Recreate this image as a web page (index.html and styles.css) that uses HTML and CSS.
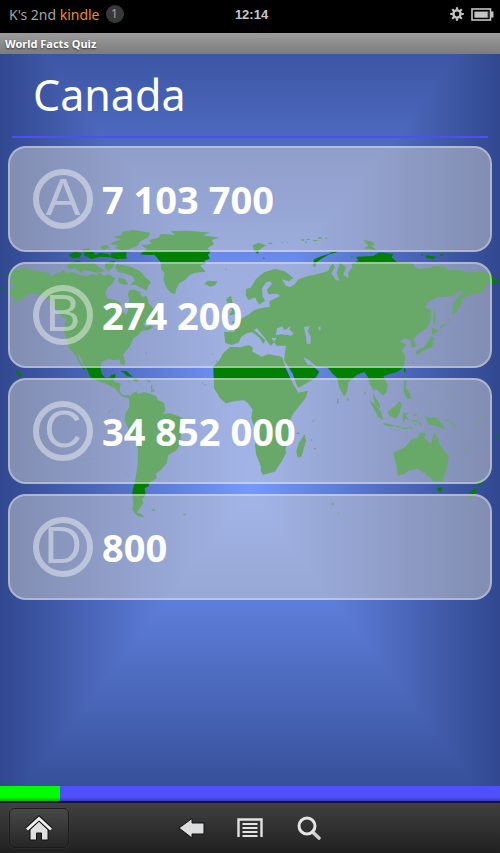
FILE: index.html
```html
<!DOCTYPE HTML>
<html lang="en">
<head>
	<title>World Facts Quiz</title>
	<meta charset="utf-8">
	<meta name="viewport" content="width=device-width, initial-scale=1">
	<link rel="stylesheet" href="styles.css">
</head>
<body>
	<header class="status">
		<div class="device">
			<span>K's 2nd <span class="brand">kindle</span></span>
			<span class="count">1</span>
		</div>
		<time class="clock">12:14</time>
		<div class="indicators">
			<svg width="14" height="14" viewBox="0 0 14 14" aria-hidden="true">
				<circle cx="7" cy="7" r="3.6" fill="none" stroke="#c4c4c4" stroke-width="2.4"/>
				<path d="M7 0.2v2.6M7 11.2v2.6M0.2 7h2.6M11.2 7h2.6M2.2 2.2l1.8 1.8M10 10l1.8 1.8M2.2 11.8L4 10M10 4l1.8-1.8" stroke="#c4c4c4" stroke-width="2.2"/>
			</svg>
			<svg width="23" height="13" viewBox="0 0 23 13" aria-hidden="true">
				<rect x="1" y="1" width="18.5" height="11" fill="#000" stroke="#c4c4c4" stroke-width="1.6"/>
				<rect x="20" y="3.5" width="2.5" height="6" fill="#c4c4c4"/>
				<rect x="3.5" y="3" width="14" height="7" fill="#555"/>
				<rect x="3.5" y="4" width="13" height="5.5" fill="#c4c4c4"/>
			</svg>
		</div>
	</header>

	<div class="titlebar">World Facts Quiz</div>

	<main class="quiz">
		<svg class="map" viewBox="0 0 1500 900" aria-hidden="true">
			<!-- North America -->
			<path d="M25 165L45 148 75 143 90 150 110 152 150 160 152 172 160 164 185 155 190 150 200 158 215 156 240 165 265 168 275 162 290 165 300 158 312 168 325 162 345 175 338 190 322 203 316 220 322 235 345 240 362 250 366 272 378 285 385 272 382 255 389 240 383 225 388 209 405 209 420 216 425 231 440 228 446 250 462 268 472 285 470 300 450 303 428 312 438 322 450 316 462 320 445 330 425 332 415 345 400 355 390 378 368 405 375 425 372 438 362 430 358 418 345 421 325 418 305 425 302 445 305 462 318 475 330 472 333 465 347 461 345 473 339 484 362 491 358 512 369 526 385 524 393 530 380 535 365 528 355 516 343 504 318 491 290 482 270 471 265 455 252 435 241 410 233 400 238 420 255 445 252 450 238 430 224 403 206 383 202 365 192 335 195 310 200 298 185 290 172 274 158 255 148 238 120 226 95 219 80 224 70 236 50 246 28 259 18 271 42 242 56 236 40 235 25 220 27 208 43 203 43 194 20 190 28 181 43 180Z"/>
			<!-- Arctic islands -->
			<path d="M365 36L400 30 450 38 446 51 420 64 414 76 392 86 365 90 346 85 354 76 328 72 345 64 365 60 340 50 365 45Z"/>
			<path d="M350 132L372 136 395 142 420 153 436 172 453 187 444 198 441 213 425 204 405 194 390 196 404 181 396 168 374 160 356 157 345 143Z"/>
			<path d="M210 128L235 122 250 130 282 128 300 143 315 153 290 158 255 151 242 158 225 145 210 148 198 138ZM205 105L225 95 245 100 240 112 218 115ZM250 98L280 94 285 105 300 98 328 103 330 112 300 110 275 117 255 108ZM333 98L380 96 378 106 380 116 350 117 330 112ZM315 128L345 122 340 140 325 153 315 145ZM300 79L322 74 328 84 308 90ZM245 88L268 84 270 92 250 97ZM356 172L375 178 385 194 366 193 354 185Z"/>
			<!-- Greenland -->
			<path d="M420 103L440 88 425 76 455 71 448 60 475 53 483 42 525 44 512 34 555 32 585 34 630 38 608 46 657 53 635 60 642 73 622 85 633 94 624 105 630 116 612 122 620 130 600 136 617 155 585 158 568 166 555 180 538 190 528 208 526 222 512 218 499 203 490 180 493 160 482 145 484 130 464 105 442 105Z"/>
			<!-- Caribbean and small Atlantic islands -->
			<path d="M360 453L380 454 398 471 382 469 371 459ZM402 474L418 479 410 486 399 481ZM383 482L390 484 384 487ZM613 191L623 182 652 184 646 195 630 200ZM55 453L65 466 60 470 46 456Z"/>
			<!-- South America -->
			<path d="M386 532L400 519 410 514 414 523 431 516 451 521 468 528 474 540 492 549 496 569 489 583 512 580 540 590 558 602 555 622 543 640 541 673 530 690 505 705 500 729 485 747 467 762 471 774 448 788 447 798 434 805 437 826 426 838 430 850 420 864 410 878 425 882 432 892 412 888 397 870 399 850 397 815 406 780 413 735 414 690 411 666 393 648 384 622 374 600 377 580 388 562 388 545Z"/>
			<!-- Europe and Asia with the Black and Caspian seas cut out -->
			<path fill-rule="evenodd" d="M672 336L703 335 710 316 693 306 718 300 745 284 765 269 785 264 810 260 808 244 840 228 832 221 806 223 800 210 816 192 811 184 798 187 786 205 788 230 795 242 777 254 765 232 745 240 737 225 738 207 752 203 768 177 792 157 825 147 855 154 880 174 867 184 846 178 858 197 870 202 884 193 896 178 925 168 950 163 985 153 992 138 1000 130 1004 142 994 160 1008 180 1018 182 1010 158 1020 128 1038 140 1030 165 1045 174 1045 155 1058 142 1054 132 1075 122 1068 110 1120 108 1138 97 1180 101 1175 112 1190 126 1240 129 1243 140 1258 146 1290 143 1305 138 1335 140 1342 150 1380 149 1400 158 1450 154 1480 167 1477 176 1497 182 1485 193 1470 188 1453 195 1457 208 1433 222 1407 224 1388 236 1378 262 1362 285 1357 258 1372 232 1393 214 1375 212 1362 228 1310 232 1285 246 1275 263 1293 270 1292 302 1280 325 1250 345 1241 357 1249 379 1236 383 1232 362 1213 355 1200 365 1220 373 1206 391 1216 413 1212 440 1193 455 1150 468 1163 496 1160 516 1149 528 1130 508 1119 510 1123 528 1138 549 1141 566 1126 554 1119 532 1121 508 1110 494 1105 473 1093 456 1071 464 1045 487 1042 512 1033 530 1018 504 1012 474 1001 464 983 443 950 440 927 420 910 412 922 433 938 437 958 455 947 473 897 503 891 498 878 461 852 420 858 377 829 377 822 366 829 354 814 353 823 366 812 378 794 353 771 324 762 330 796 361 790 372 779 354 757 336 740 340 723 352 715 368 695 375 676 369ZM828 345L831 325 847 319 854 331 872 318 869 329 882 340 874 347 845 343ZM912 322L930 317 923 333 932 350 932 371 920 372 918 350ZM956 322L962 319 961 332 956 329Z"/>
			<!-- Africa -->
			<path d="M640 440L659 419 668 401 690 381 720 382 748 375 759 383 757 395 786 410 805 402 846 411 858 446 878 489 895 518 924 512 917 534 880 580 868 605 873 635 870 660 856 685 858 700 844 725 825 755 789 764 782 752 783 740 768 702 765 675 769 640 754 594 758 569 744 550 733 541 710 542 678 550 660 535 642 504Z"/>
			<path d="M914 643L918 662 904 711 892 712 889 695 896 670ZM678 238L693 227 697 247 706 268 711 281 687 286 697 270 686 255ZM672 273L685 262 686 278 673 285ZM1042 531L1048 539 1042 544Z"/>
			<path d="M938 137L942 118 965 108 993 100 967 115 950 127 946 142ZM1092 85L1110 74 1130 91 1112 88ZM1090 59L1118 65 1125 76 1105 77ZM758 76L776 68 798 76 780 88 773 101 762 92ZM1276 106L1310 110 1298 117 1280 113Z"/>
			<!-- East and South-East Asia -->
			<path d="M1303 263L1307 295 1304 319 1300 300ZM1294 322L1317 333 1297 345ZM1293 350L1302 352 1297 381 1276 389 1250 405 1248 393 1273 381ZM1212 444L1218 448 1212 461ZM1213 477L1220 483 1217 502 1228 516 1234 535 1222 538 1210 514ZM1162 575L1186 558 1200 543 1205 553 1198 583 1187 596 1168 587ZM1108 540L1122 551 1142 574 1150 600 1135 592 1120 564ZM1150 609L1182 615 1179 620 1153 616ZM1207 580L1230 577 1217 586 1229 603 1217 594 1210 609ZM1275 588L1290 593 1305 591 1321 605 1335 628 1315 621 1303 617 1285 613Z"/>
			<!-- Australia and New Zealand -->
			<path d="M1180 699L1215 681 1236 658 1251 655 1260 638 1277 638 1273 655 1293 672 1302 637 1313 654 1319 674 1346 708 1341 745 1327 785 1300 783 1286 767 1278 770 1280 755 1271 760 1254 746 1225 752 1212 763 1193 767 1190 740ZM1311 803L1328 802 1323 815 1315 814ZM1434 781L1448 786 1437 799 1431 794ZM1423 804L1431 809 1420 824 1407 837 1405 826Z"/>
			<!-- Small islands -->
			<path class="islets" d="M5 205h6M15 270h2M20 160v6M437 400h4M325 575h6M335 570h3M322 582h2M455 870h10M550 884h7M253 720h3M273 716h3M90 672h3M124 692h2M378 760h3M440 480l12 6M455 495v22M460 508v8M606 489h2M614 495h3M638 427h2M648 424h3M637 402h2M676 148h3M805 70h12M790 115h3M845 68h3M862 68h2M905 60h8M920 58h10M940 62h12M955 54h10M975 55h6M915 67h6M990 100l20-5M1055 110h2M1265 105h4M1320 105h10M1342 103h4M1205 398l10 12M1240 425v6M1248 412h2M1320 325l18-15M1342 305l8-10M1355 285l5-8M1400 260h2M1430 275h2M1013 535v16M1015 545h2M935 605h3M940 600h3M933 660h4M890 640h8M942 686h6M995 852h6M1014 878h2M1095 515v8M1240 585h10M1235 602h18M1187 620h15M1205 625h20M1228 618l8 8M1243 613h6M1258 606l5 12M1335 602l15-3M1350 603l20 20M1380 635h4M1314 496v3M1270 540h3M1290 548h2M1325 550h2M1350 530h3M1425 575h2M1440 590h4M1433 612h4M1395 686h6M1402 670h2M1438 668h3M1490 650h8M1476 683h4M1397 860h3"/>
		</svg>

		<h1 class="question">Canada</h1>

		<div class="answers">
			<button type="button" class="answer"><span class="letter">A</span><span>7 103 700</span></button>
			<button type="button" class="answer"><span class="letter">B</span><span>274 200</span></button>
			<button type="button" class="answer"><span class="letter">C</span><span>34 852 000</span></button>
			<button type="button" class="answer"><span class="letter">D</span><span>800</span></button>
		</div>
	</main>

	<progress class="timer" value="12" max="100" aria-label="Quiz progress"></progress>

	<nav class="toolbar">
		<button type="button" class="home" aria-label="Home">
			<svg width="28" height="26" viewBox="0 0 28 26">
				<path d="M5 14.5L14 6l9 8.5V25h-6.500v-7h-5v7H5z" fill="#dfdfdf" stroke="#111" stroke-width="1"/>
				<path d="M2 14.500L14 3.500l12 11" fill="none" stroke="#111" stroke-width="5"/>
				<path d="M2 14.500L14 3.500l12 11" fill="none" stroke="#eee" stroke-width="3"/>
			</svg>
		</button>
		<div class="tools">
			<button type="button" aria-label="Back">
				<svg width="28" height="24" viewBox="0 0 28 24">
					<path d="M2 12L15 2.500V7h12v11H15v4z" fill="#dcdedf" stroke="#111" stroke-width="1"/>
				</svg>
			</button>
			<button type="button" aria-label="Menu">
				<svg width="28" height="24" viewBox="0 0 28 24">
					<path d="M2.500 21V3.500h23V21" fill="none" stroke="#e2e2e2" stroke-width="2.400"/>
					<path d="M6.500 8h15M6.500 12h15M6.500 16h15M6.500 20h15" stroke="#e2e2e2" stroke-width="2"/>
				</svg>
			</button>
			<button type="button" aria-label="Search">
				<svg width="28" height="26" viewBox="0 0 28 26">
					<path d="M17.500 17l6.500 6" stroke="#cfcfcf" stroke-width="3.600" stroke-linecap="round"/>
					<circle cx="12" cy="11" r="8" fill="none" stroke="#e4e4e4" stroke-width="3"/>
				</svg>
			</button>
		</div>
	</nav>
</body>
</html>
```
FILE: styles.css
```css
* {
	box-sizing: border-box;
}

body {
	margin: 0;
	min-height: 100vh;
	display: flex;
	flex-direction: column;
	background: #000;
	color: #fff;
	font-family: "Noto Sans", "Open Sans", sans-serif;
}

button {
	margin: 0;
	padding: 0;
	border: 0;
	background: none;
	color: inherit;
	font-family: inherit;
	cursor: pointer;
}

svg {
	display: block;
}

.status {
	display: grid;
	grid-template-columns: 1fr auto 1fr;
	align-items: center;
	height: 33px;
	padding: 0 6px 5px 9px;
	color: #a4a4a4;
	font-size: 14px;
}

.device {
	display: flex;
	align-items: center;
	gap: 6px;
}

.brand {
	color: #e8901a;
}

.count {
	width: 18px;
	height: 18px;
	border-radius: 50%;
	background: #383838;
	font-size: 12px;
	line-height: 18px;
	text-align: center;
}

.clock {
	color: #c8c8c8;
	font: bold 13px "Liberation Sans", sans-serif;
}

.indicators {
	display: flex;
	justify-content: flex-end;
	align-items: center;
	gap: 7px;
}

.titlebar {
	height: 21px;
	padding-left: 5px;
	background: linear-gradient(#9c9c9c, #7c7c7c);
	font-size: 11px;
	font-weight: bold;
	line-height: 21px;
	text-shadow: 0 1px 2px #333;
}

/* The darker of the two gradients wins, which gives the pyramid shading */
.quiz {
	position: relative;
	flex: 1;
	padding: 0 8px 24px;
	background:
		linear-gradient(to right, #314890, #7599ff 50%, #314890),
		linear-gradient(#3c56a4, #4f6cc3 13%, #6a8bec 28%, #7599ff 60%, #36509a);
	background-blend-mode: darken;
}

.map {
	position: absolute;
	top: 166px;
	left: 0;
	width: 100%;
	fill: #008000;
}

.islets {
	fill: none;
	stroke: #008000;
	stroke-width: 4;
}

.question {
	position: relative;
	margin: 0 4px 8px;
	padding: 0 21px;
	border-bottom: 2px solid #4c50f0;
	font-size: 43px;
	font-weight: normal;
	line-height: 82px;
}

.answers {
	position: relative;
	display: grid;
	gap: 10px;
}

.answer {
	display: flex;
	align-items: center;
	gap: 9px;
	height: 106px;
	padding: 0 23px;
	border: 2px solid rgba(255,255,255,0.35);
	border-radius: 18px;
	background: rgba(207,207,207,0.5);
	font-size: 38px;
	font-weight: bold;
}

.letter {
	width: 60px;
	height: 60px;
	border: 6px solid;
	border-radius: 50%;
	color: #fff;
	opacity: 0.43;
	font: 52px/44px "Liberation Sans", sans-serif;
	text-align: center;
}

.timer {
	display: block;
	width: 100%;
	height: 17px;
	border: 0;
	border-bottom: 2px solid #14143c;
	background: #5050fa;
	appearance: none;
}

.timer::-webkit-progress-bar {
	background: linear-gradient(#5050fa 75%, #3838b8);
}

.timer::-webkit-progress-value {
	background: linear-gradient(#00ff00 75%, #00b800);
}

.toolbar {
	display: grid;
	grid-template-columns: 1fr auto 1fr;
	align-items: center;
	height: 50px;
	padding: 0 9px;
	background: linear-gradient(#404040, #202020);
}

.home {
	display: grid;
	place-items: center;
	width: 60px;
	height: 40px;
	border: 1px solid #1c1c1c;
	border-radius: 5px;
	background: linear-gradient(#484848, #262626);
	box-shadow: 0 0 1px #666;
}

.tools {
	display: flex;
	align-items: center;
	gap: 31px;
}
```
